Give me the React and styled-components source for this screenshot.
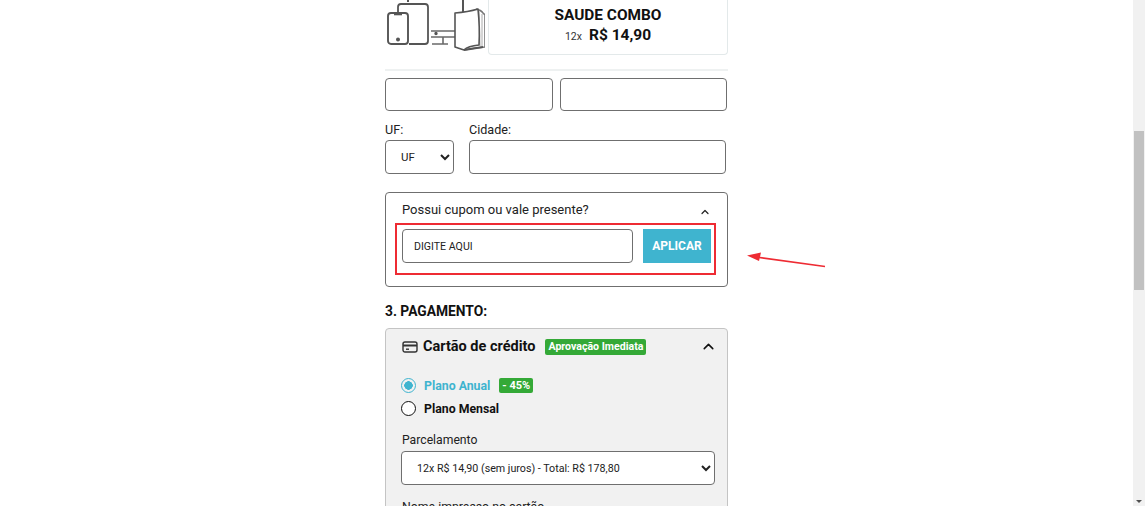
import styled, { createGlobalStyle } from "styled-components";
import { ChevronUp } from "lucide-react";

const GlobalStyle = createGlobalStyle`
  html, body { margin: 0; padding: 0; height: 100%; overflow: hidden; background: #fff; }
  body { font-family: Roboto, "Liberation Sans", sans-serif; color: #111; }
  * { box-sizing: border-box; }
`;

const DevicesIcon = () => (
  <svg width="100" height="54" viewBox="0 0 100 54" fill="none" stroke="#555" strokeWidth="1.6" strokeLinejoin="round">
    <path d="M23 0v2" strokeWidth="2" />
    <path d="M13 12V7q0-3 3-3h24q3 0 3 3v34q0 3-3 3H24" strokeWidth="1.8" />
    <rect x="3" y="13" width="20" height="31" rx="3" strokeWidth="1.9" />
    <path d="M9 14.5h8" />
    <circle cx="13" cy="39.5" r="1.2" fill="#555" />
    <path d="M46 31h24M46 37h24M58 37v7M47 44h16" stroke="#6a6a6a" />
    <circle cx="51" cy="33.5" r="0.9" fill="#555" />
    <path d="M78 0v13" strokeWidth="2" />
    <path d="M91 9q5 1 7 4l2 2v32q-11 1-21 3" stroke="#777" />
    <path d="M94 11l1 35M97 14v32" stroke="#aaa" strokeWidth="1" />
    <path d="M70 13q13-1 23-4q2 19 1 36q-11 1-15 5l-9-3z" fill="#fff" />
    <path d="M79 50l19-3" strokeWidth="1.9" />
  </svg>
);

const CardIcon = () => (
  <svg width="16" height="14" viewBox="0 0 16 14" fill="none" stroke="#333" strokeWidth="1.4">
    <rect x="1" y="2" width="14" height="10" rx="2" />
    <path d="M1 5.5h14" strokeWidth="2" />
    <path d="M4 9.2h3" />
  </svg>
);

const App = () => (
  <>
    <GlobalStyle />
    <Page>
      <Main>
        <Column>
          <ProductRow>
            <DevicesIcon />
            <ProductCard>
              <ProductName>SAUDE COMBO</ProductName>
              <ProductPrice>
                <small>12x</small>
                <strong>R$ 14,90</strong>
              </ProductPrice>
            </ProductCard>
          </ProductRow>
          <Rule />
          <NameRow>
            <TextInput />
            <TextInput />
          </NameRow>
          <CityRow>
            <Field $width={69}>
              <Label>UF:</Label>
              <Select defaultValue="UF">
                <option>UF</option>
              </Select>
            </Field>
            <Field $width={257}>
              <Label>Cidade:</Label>
              <TextInput />
            </Field>
          </CityRow>
          <CouponBox>
            <CouponHeader>
              <span>Possui cupom ou vale presente?</span>
              <CouponChevron size={12} strokeWidth={2.4} />
            </CouponHeader>
            <CouponForm>
              <CouponInput placeholder="DIGITE AQUI" />
              <ApplyButton type="button">APLICAR</ApplyButton>
            </CouponForm>
          </CouponBox>
          <SectionTitle>3. PAGAMENTO:</SectionTitle>
          <PaymentPanel>
            <PaymentHeader>
              <CardIcon />
              <PaymentTitle>Cartão de crédito</PaymentTitle>
              <Badge>Aprovação Imediata</Badge>
              <HeaderChevron size={17} strokeWidth={2.2} />
            </PaymentHeader>
            <PlanRow $first>
              <Radio $checked />
              <PlanName $active>Plano Anual</PlanName>
              <Badge $small>- 45%</Badge>
            </PlanRow>
            <PlanRow>
              <Radio />
              <PlanName>Plano Mensal</PlanName>
            </PlanRow>
            <InstallmentsLabel>Parcelamento</InstallmentsLabel>
            <InstallmentsSelect defaultValue="12">
              <option value="12">12x R$ 14,90 (sem juros) - Total: R$ 178,80</option>
            </InstallmentsSelect>
            <CardNameLabel>Nome impresso no cartão</CardNameLabel>
          </PaymentPanel>
        </Column>
      </Main>
      <ScrollTrack>
        <ScrollThumb />
        <ScrollArrow />
      </ScrollTrack>
      <Arrow width="84" height="20" viewBox="0 0 84 20">
        <path d="M10 5L79 14.5" stroke="#ee2b33" strokeWidth="1.6" fill="none" />
        <path d="M1 3.5L15 0.5L13 9z" fill="#ee2b33" />
      </Arrow>
    </Page>
  </>
);

export default App;

const Page = styled.div`
  position: relative;
  display: flex;
  width: 1145px;
  height: 506px;
  overflow: hidden;
`;

const Main = styled.main`
  flex: 1;
  padding-left: 385px;
`;

const Column = styled.div`
  width: 343px;
`;

const ProductRow = styled.div`
  display: flex;
  height: 55px;
  gap: 3px;
  align-items: flex-start;
  svg { flex: none; }
`;

const ProductCard = styled.div`
  flex: 1;
  height: 55px;
  display: flex;
  flex-direction: column;
  align-items: center;
  padding-top: 6px;
  border: 1px solid #e3e9ea;
  border-top: none;
  border-radius: 0 0 4px 4px;
`;

const ProductName = styled.div`
  font-size: 15.4px;
  font-weight: 700;
  line-height: 18px;
`;

const ProductPrice = styled.div`
  display: flex;
  align-items: baseline;
  gap: 7px;
  line-height: 23px;
  small { font-size: 10.5px; color: #333; }
  strong { font-size: 15.5px; font-weight: 700; }
`;

const Rule = styled.div`
  height: 2px;
  margin-top: 14px;
  background: #eef1f1;
`;

const NameRow = styled.div`
  display: grid;
  grid-template-columns: 168px 167px;
  gap: 7px;
  height: 33px;
  margin-top: 7px;
`;

const TextInput = styled.input`
  width: 100%;
  height: 100%;
  padding: 0 12px;
  border: 1px solid #6f6f6f;
  border-radius: 4px;
  background: #fff;
  outline: none;
`;

const CityRow = styled.div`
  display: flex;
  gap: 15px;
  margin-top: 8px;
`;

const Field = styled.div`
  width: ${(p) => p.$width}px;
  display: flex;
  flex-direction: column;
  input { height: 34px; }
`;

const Label = styled.label`
  font-size: 12.6px;
  line-height: 21px;
  color: #222;
`;

const Select = styled.select`
  height: 34px;
  width: 100%;
  padding: 0 11px;
  border: 1px solid #6f6f6f;
  border-radius: 4px;
  background: #fff;
  color: #222;
  font-family: inherit;
  font-size: 11.5px;
`;

const CouponBox = styled.section`
  height: 95px;
  margin-top: 18px;
  padding: 0 10px 0 9px;
  border: 1px solid #6f6f6f;
  border-radius: 4px;
`;

const CouponHeader = styled.div`
  display: flex;
  justify-content: space-between;
  align-items: center;
  height: 30px;
  padding: 3px 6px 0 7px;
  font-size: 13px;
  color: #222;
`;

const CouponChevron = styled(ChevronUp)`
  margin-top: 4px;
`;

const CouponForm = styled.div`
  display: flex;
  align-items: flex-start;
  gap: 10px;
  width: 321px;
  height: 52px;
  padding: 4px 3px 0 5px;
  border: 2px solid #ee2b33;
`;

const CouponInput = styled.input`
  flex: 1;
  min-width: 0;
  height: 34px;
  padding: 0 11px;
  border: 1px solid #6f6f6f;
  border-radius: 4px;
  font-family: inherit;
  font-size: 10.6px;
  outline: none;
  &::placeholder { color: #222; opacity: 1; }
`;

const ApplyButton = styled.button`
  flex: none;
  width: 68px;
  height: 34px;
  border: none;
  background: #3fb4cf;
  color: #fff;
  font-family: inherit;
  font-size: 12px;
  font-weight: 700;
`;

const SectionTitle = styled.h2`
  margin: 15px 0 0;
  font-size: 13.8px;
  font-weight: 700;
  line-height: 18px;
  color: #111;
`;

const PaymentPanel = styled.section`
  margin-top: 8px;
  height: 240px;
  padding: 0 12px 0 16px;
  background: #f1f1f1;
  border: 1px solid #c4c4c4;
  border-radius: 4px;
`;

const PaymentHeader = styled.div`
  display: flex;
  align-items: center;
  height: 35px;
  gap: 5px;
`;

const PaymentTitle = styled.span`
  font-size: 14.5px;
  font-weight: 700;
  margin-right: 5px;
`;

const Badge = styled.span`
  padding: 0 3px;
  height: ${(p) => (p.$small ? 15 : 16)}px;
  line-height: ${(p) => (p.$small ? 15 : 16)}px;
  margin-left: ${(p) => (p.$small ? 1 : 0)}px;
  background: #34a937;
  border-radius: 2px;
  color: #fff;
  font-size: ${(p) => (p.$small ? 11 : 10.6)}px;
  font-weight: 700;
`;

const HeaderChevron = styled(ChevronUp)`
  margin-left: auto;
  margin-right: -2px;
`;

const PlanRow = styled.div`
  display: flex;
  align-items: center;
  gap: 8px;
  height: 23px;
  margin-top: ${(p) => (p.$first ? 10 : 0)}px;
  margin-left: -1px;
`;

const Radio = styled.span`
  flex: none;
  width: 15px;
  height: 15px;
  border-radius: 50%;
  border: ${(p) => (p.$checked ? "1.5px solid #3fb4cf" : "1.5px solid #111")};
  background: ${(p) => (p.$checked ? "radial-gradient(circle, #3fb4cf 0 4px, transparent 4.5px)" : "#fff")};
`;

const PlanName = styled.span`
  font-size: 12.3px;
  font-weight: 700;
  color: ${(p) => (p.$active ? "#3fb4cf" : "#111")};
`;

const InstallmentsLabel = styled.div`
  margin-top: 10px;
  font-size: 12.2px;
  line-height: 20px;
  color: #222;
`;

const InstallmentsSelect = styled(Select)`
  display: block;
  width: 314px;
  margin-top: 1px;
  margin-left: -1px;
  padding: 0 11px;
  font-size: 10.7px;
`;

const CardNameLabel = styled.div`
  margin-top: 12px;
  font-size: 12.3px;
  line-height: 20px;
  color: #222;
`;

const ScrollTrack = styled.aside`
  position: relative;
  flex: none;
  width: 12px;
  height: 100%;
  padding: 131px 1px 0;
  background: #f1f1f1;
`;

const ScrollThumb = styled.div`
  height: 159px;
  background: #c1c1c1;
`;

const ScrollArrow = styled.div`
  position: absolute;
  left: 3px;
  bottom: 3px;
  border-left: 3px solid transparent;
  border-right: 3px solid transparent;
  border-top: 3px solid #505050;
`;

const Arrow = styled.svg`
  position: absolute;
  left: 746px;
  top: 252px;
`;
